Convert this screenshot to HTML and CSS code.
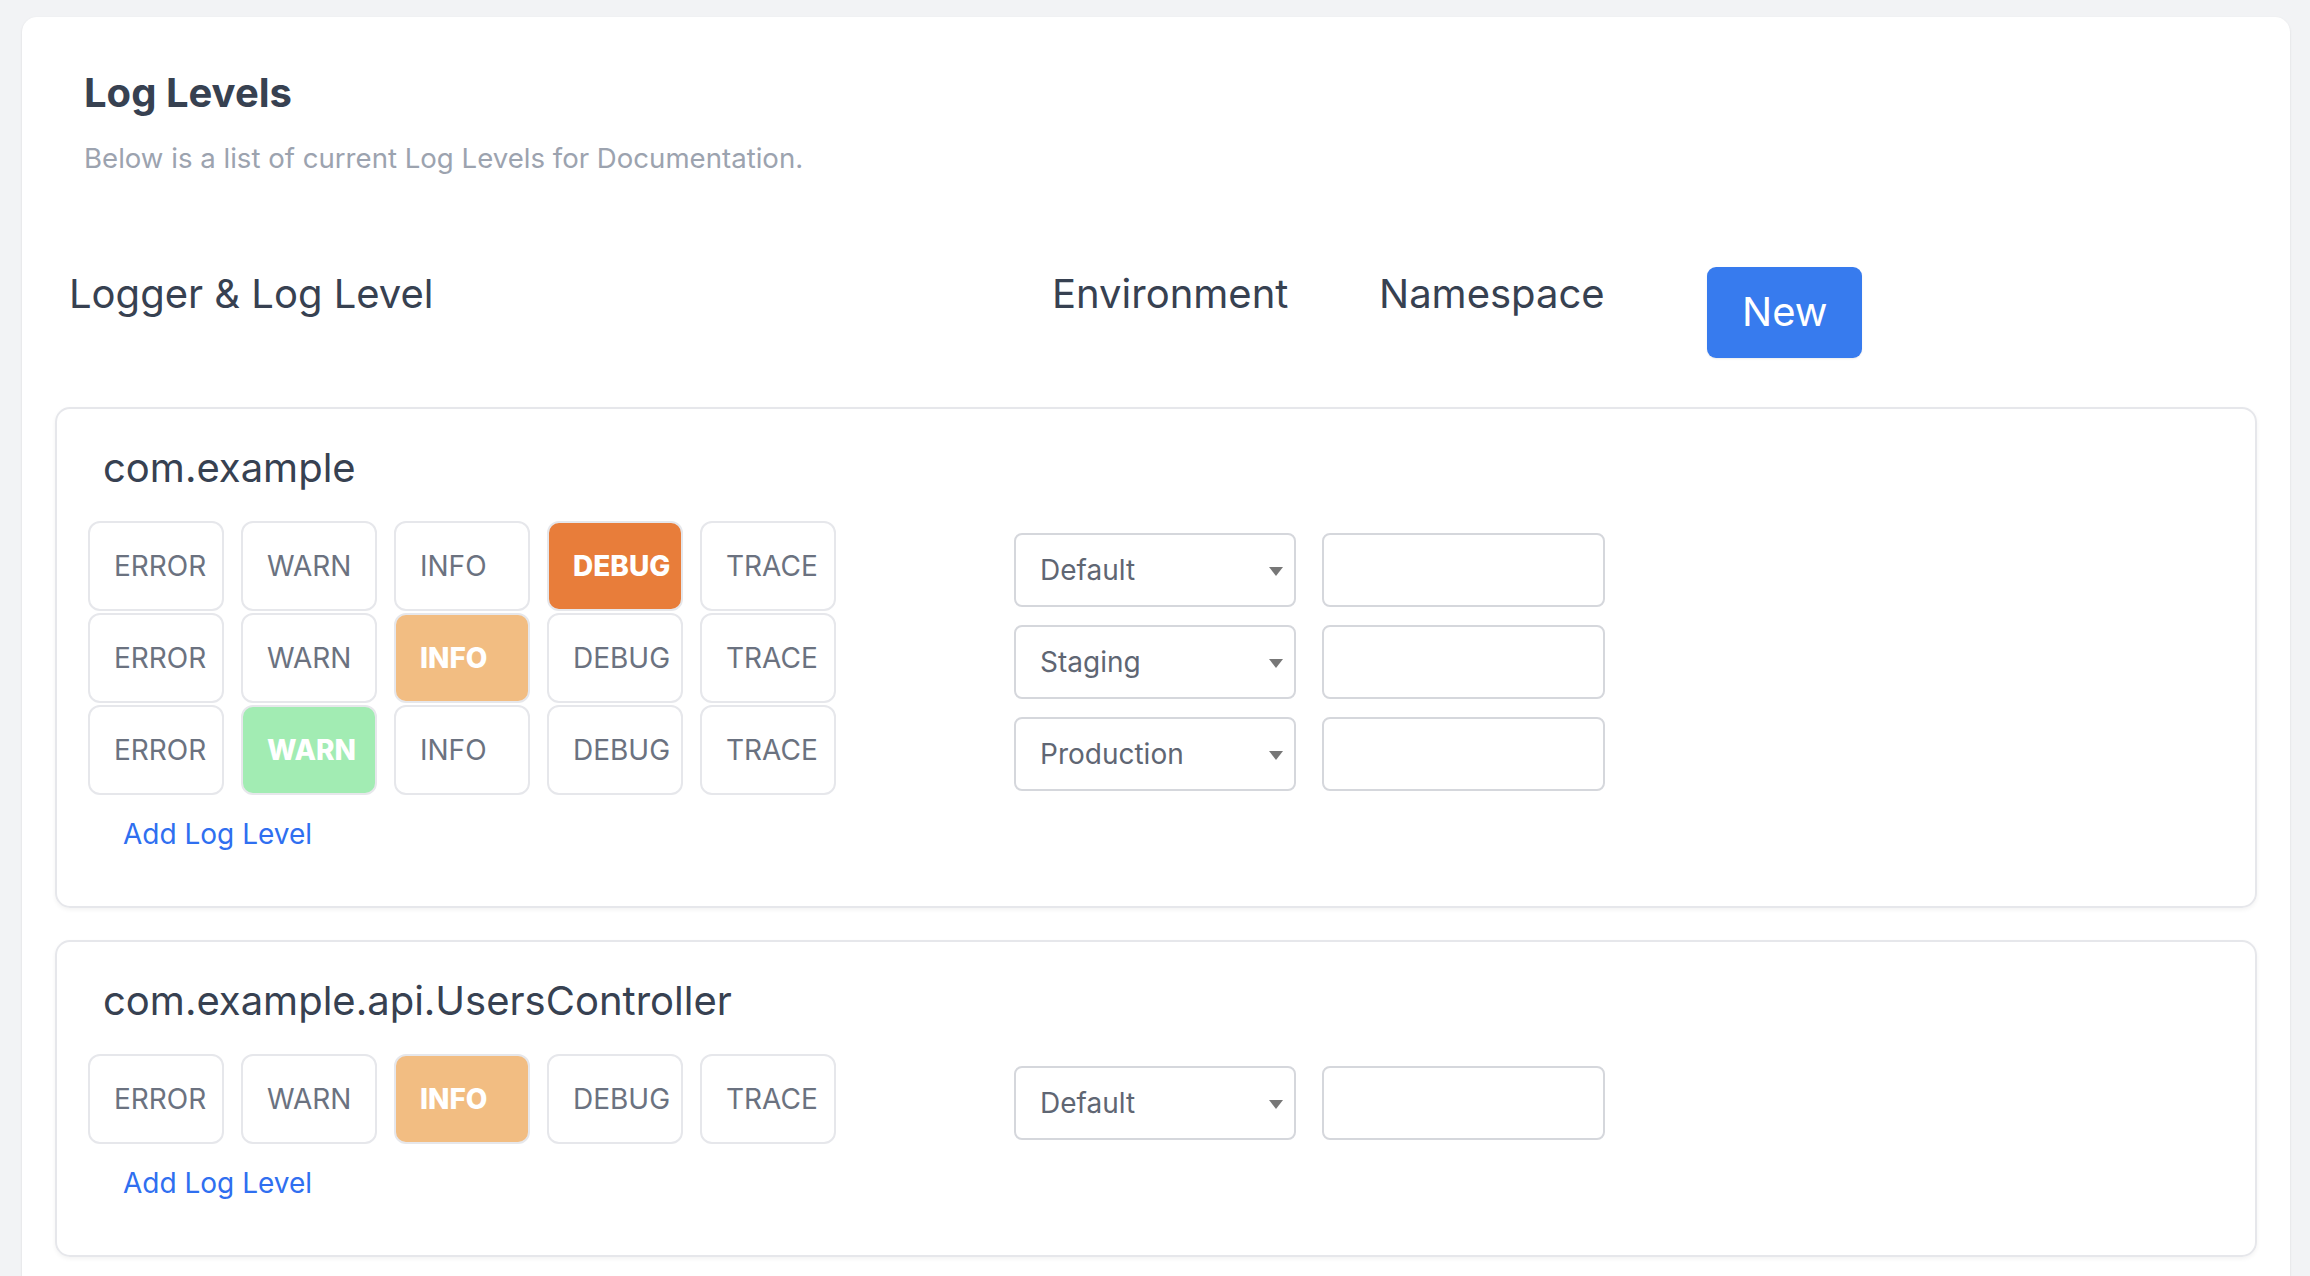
FILE: index.html
```html
<!DOCTYPE html>
<html lang="en">
<head>
<meta charset="utf-8">
<title>Log Levels</title>
<link rel="stylesheet" href="styles.css">
</head>
<body>
<div class="page">
  <div class="panel">
    <div class="intro">
      <h1 class="intro-title">Log Levels</h1>
      <p class="intro-sub">Below is a list of current Log Levels for Documentation.</p>
    </div>

    <div class="head-row">
      <div class="head-logger">Logger &amp; Log Level</div>
      <div class="head-env">Environment</div>
      <div class="head-ns">Namespace</div>
      <button class="btn-new">New</button>
    </div>

    <div class="logger-card">
      <div class="logger-name">com.example</div>
      <div class="level-rows">
        <div class="level-row">
          <div class="chips">
            <span class="chip">ERROR</span>
            <span class="chip">WARN</span>
            <span class="chip">INFO</span>
            <span class="chip chip-debug">DEBUG</span>
            <span class="chip">TRACE</span>
          </div>
          <div class="fields">
            <div class="select">Default<span class="caret"></span></div>
            <div class="text-input"></div>
          </div>
        </div>
        <div class="level-row">
          <div class="chips">
            <span class="chip">ERROR</span>
            <span class="chip">WARN</span>
            <span class="chip chip-info">INFO</span>
            <span class="chip">DEBUG</span>
            <span class="chip">TRACE</span>
          </div>
          <div class="fields">
            <div class="select">Staging<span class="caret"></span></div>
            <div class="text-input"></div>
          </div>
        </div>
        <div class="level-row">
          <div class="chips">
            <span class="chip">ERROR</span>
            <span class="chip chip-warn">WARN</span>
            <span class="chip">INFO</span>
            <span class="chip">DEBUG</span>
            <span class="chip">TRACE</span>
          </div>
          <div class="fields">
            <div class="select">Production<span class="caret"></span></div>
            <div class="text-input"></div>
          </div>
        </div>
      </div>
      <a class="add-link">Add Log Level</a>
    </div>

    <div class="logger-card">
      <div class="logger-name">com.example.api.UsersController</div>
      <div class="level-rows">
        <div class="level-row">
          <div class="chips">
            <span class="chip">ERROR</span>
            <span class="chip">WARN</span>
            <span class="chip chip-info">INFO</span>
            <span class="chip">DEBUG</span>
            <span class="chip">TRACE</span>
          </div>
          <div class="fields">
            <div class="select">Default<span class="caret"></span></div>
            <div class="text-input"></div>
          </div>
        </div>
      </div>
      <a class="add-link">Add Log Level</a>
    </div>
  </div>
</div>
</body>
</html>
```

FILE: styles.css
```css
* { box-sizing: border-box; }

html, body {
  margin: 0;
  padding: 0;
  background: #f2f3f5;
  font-family: "Inter", "Liberation Sans", sans-serif;
  color: #374151;
}

.page {
  padding: 17px 20px 0 22px;
}

.panel {
  background: #ffffff;
  border-radius: 15px;
  box-shadow: 0 1px 3px rgba(0, 0, 0, 0.08), 0 1px 2px rgba(0, 0, 0, 0.04);
  padding: 52px 33px 40px 33px;
  min-height: 1400px;
}

.intro {
  padding-left: 29px;
}

.intro-title {
  margin: 0;
  font-size: 40px;
  line-height: 48px;
  font-weight: 700;
  color: #374151;
}

.intro-sub {
  margin: 21px 0 0 0;
  font-size: 27.6px;
  line-height: 40px;
  color: #9ca3af;
}

.head-row {
  display: flex;
  align-items: flex-start;
  margin-top: 89px;
  padding-left: 14px;
  font-size: 40px;
  line-height: 48px;
  color: #374151;
}

.head-logger {
  width: 983px;
  margin-top: 3px;
}

.head-env {
  width: 327px;
  margin-top: 3px;
}

.head-ns {
  width: 328px;
  margin-top: 3px;
}

.btn-new {
  font-family: inherit;
  font-size: 40px;
  line-height: 48px;
  font-weight: 400;
  color: #ffffff;
  background: #377bee;
  border: none;
  border-radius: 9px;
  padding: 21px 35px 22px 35px;
  box-shadow: 0 1px 2px rgba(0, 0, 0, 0.08);
}

.logger-card {
  margin-top: 49px;
  border: 2px solid #e6e7eb;
  border-radius: 15px;
  box-shadow: 0 2px 4px rgba(0, 0, 0, 0.05);
  padding: 35px 31px 52px 31px;
}

.logger-card + .logger-card {
  margin-top: 32px;
}

.logger-name {
  margin-left: 15px;
  font-size: 40px;
  line-height: 48px;
  color: #374151;
}

.level-rows {
  margin-top: 29px;
  display: flex;
  flex-direction: column;
  gap: 2px;
}

.level-row {
  display: flex;
  align-items: flex-start;
}

.chips {
  display: flex;
  gap: 17px;
  flex: none;
}

.chip {
  width: 136px;
  height: 90px;
  border: 2px solid #e6e7eb;
  border-radius: 12px;
  display: flex;
  align-items: center;
  padding-left: 24px;
  font-size: 28px;
  color: #6b7280;
  background: #ffffff;
}

.chip-debug {
  background: #e87d3a;
  color: #ffffff;
  font-weight: 800;
}

.chip-info {
  background: #f2bd82;
  color: #ffffff;
  font-weight: 800;
}

.chip-warn {
  background: #a2ecb3;
  color: #ffffff;
  font-weight: 800;
}

.fields {
  display: flex;
  gap: 26px;
  margin-left: 178px;
  margin-top: 12px;
  flex: none;
}

.select,
.text-input {
  width: 282px;
  height: 74px;
  border: 2px solid #d5d7dc;
  border-radius: 8px;
  background: #ffffff;
  flex: none;
}

.text-input {
  width: 283px;
}

.select {
  display: flex;
  align-items: center;
  justify-content: space-between;
  padding: 0 11px 0 24px;
  font-size: 28px;
  color: #5f6673;
}

.caret {
  width: 0;
  height: 0;
  border-left: 7.5px solid transparent;
  border-right: 7.5px solid transparent;
  border-top: 9px solid #777777;
  margin-top: 2px;
}

.add-link {
  display: block;
  margin: 19px 0 0 35px;
  font-size: 28px;
  line-height: 40px;
  color: #2f6ff0;
  cursor: pointer;
}
```
